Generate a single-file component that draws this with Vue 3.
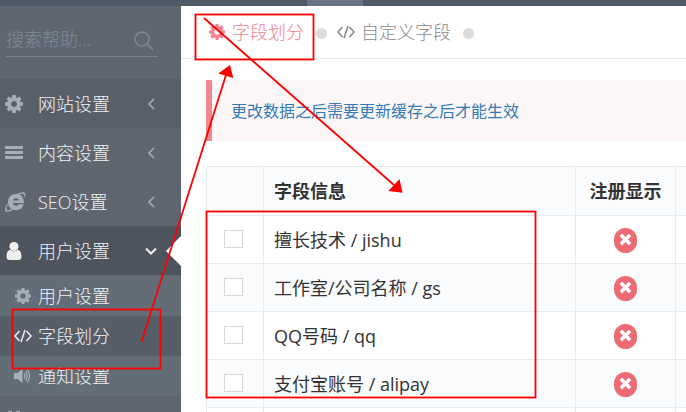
<script setup>
import { ref } from 'vue'

const cogPath = 'M1024 640q0 106 -75 181t-181 75t-181 -75t-75 -181t75 -181t181 -75t181 75t75 181zM1536 749v-222q0 -12 -8 -23t-20 -13l-185 -28q-19 -54 -39 -91q35 -50 107 -138q10 -12 10 -25t-9 -23q-27 -37 -99 -108t-94 -71q-12 0 -26 9l-138 108q-44 -23 -91 -38q-16 -136 -29 -186q-7 -28 -36 -28h-222q-14 0 -24.5 8.5t-11.5 21.5l-28 184q-49 16 -90 37l-141 -107q-10 -9 -25 -9q-14 0 -25 11q-126 114 -165 168q-7 10 -7 23q0 12 8 23q15 21 51 66.5t54 70.5q-27 50 -41 99l-183 27q-13 2 -21 12.5t-8 23.5v222q0 12 8 23t19 13l186 28q14 46 39 92q-40 57 -107 138q-10 12 -10 24q0 10 9 23q26 36 98.5 107.5t94.5 71.5q13 0 26 -10l138 -107q44 23 91 38q16 136 29 186q7 28 36 28h222q14 0 24.5 -8.5t11.5 -21.5l28 -184q49 -16 90 -37l142 107q9 9 24 9q13 0 25 -10q129 -119 165 -170q7 -8 7 -22q0 -12 -8 -23q-15 -21 -51 -66.5t-54 -70.5q26 -50 41 -98l183 -28q13 -2 21 -12.5t8 -23.5z'
const timesPath = 'M1298 214q0 -40 -28 -68l-136 -136q-28 -28 -68 -28t-68 28l-294 294l-294 -294q-28 -28 -68 -28t-68 28l-136 136q-28 28 -28 68t28 68l294 294l-294 294q-28 28 -28 68t28 68l136 136q28 28 68 28t68 -28l294 -294l294 294q28 28 68 28t68 -28l136 -136q28 -28 28 -68t-28 -68l-294 -294l294 -294q28 -28 28 -68z'

const query = ref('')
const rows = ref([
  { label: '擅长技术 / jishu', checked: false },
  { label: '工作室/公司名称 / gs', checked: false },
  { label: 'QQ号码 / qq', checked: false },
  { label: '支付宝账号 / alipay', checked: false },
  { label: '', checked: false }
])
</script>

<template>
  <div class="page">
    <header class="topbar"><span class="topbar-tab"></span></header>
    <div class="body">
      <aside class="sidebar">
        <form class="search" @submit.prevent>
          <input v-model="query" type="text" placeholder="搜索帮助..." aria-label="搜索帮助" />
          <button type="submit" aria-label="搜索">
            <svg width="20" height="20" viewBox="0 0 20 20" fill="none" stroke="currentColor" stroke-width="1.4">
              <circle cx="8" cy="8" r="7" />
              <path d="M13 13L19.3 19.3" />
            </svg>
          </button>
        </form>
        <nav class="menu">
          <a class="item shaded" href="#">
            <svg class="icon" viewBox="0 0 18 18"><svg x="0" y="0" width="18" height="18" viewBox="0 -1408 1536 1536"><path :d="cogPath" transform="scale(1,-1)" /></svg></svg>
            <span>网站设置</span>
            <svg class="chevron" viewBox="0 0 12 12"><path d="M9 1L4 6L9 11" /></svg>
          </a>
          <a class="item" href="#">
            <svg class="icon" viewBox="0 0 18 18"><path d="M0 2h18v3H0zM0 7h18v3H0zM0 12h18v3H0z" /></svg>
            <span>内容设置</span>
            <svg class="chevron" viewBox="0 0 12 12"><path d="M9 1L4 6L9 11" /></svg>
          </a>
          <a class="item" href="#">
            <svg class="icon ie" viewBox="0 0 22 20">
              <path fill-rule="evenodd" d="M12.2 2C17 2 20 5.300 20 11H8.800C9 12.800 10.200 13.800 12 13.800C13.500 13.800 14.500 13.300 15 12.300H19.700C18.600 16.200 15.900 18.200 12.200 18.200C7.300 18.200 4 14.900 4 10.200C4 5.500 7.300 2 12.200 2ZM8.900 8.500H15.100C14.900 7.100 13.900 6.200 12 6.200C10.200 6.200 9.200 7.100 8.900 8.500Z" />
              <path d="M3.800 9.500C7 5.600 10.800 2.700 15.500.8C18.200-.2 20.300 0 21 1.100C21.700 2.300 21.400 4.300 20.300 6.500C20.600 4.500 20.600 3 19.500 2.200C18 1.200 15.500 2 12.800 3.500C9.500 5.200 6.400 7.700 3.800 9.500Z" />
              <path d="M3.300 11.500C1.200 15.200.3 18 1.600 19.300C3.200 20.700 6.700 19.300 9.800 17.200L8.300 16.400C5.800 18 3.700 18.700 2.900 17.900C2 17 2.600 14.500 4.300 11.500Z" />
            </svg>
            <span>SEO设置</span>
            <svg class="chevron" viewBox="0 0 12 12"><path d="M9 1L4 6L9 11" /></svg>
          </a>
          <a class="item active" href="#">
            <svg class="icon" viewBox="0 0 18 18"><circle cx="9" cy="4.500" r="4.500" /><path d="M5.500 7.800C3 8 1.500 10.500 1.500 14.500C1.500 17 2.700 18 4.500 18H13.500C15.300 18 16.500 17 16.500 14.500C16.500 10.500 15 8 12.500 7.800C10.500 9.800 7.500 9.800 5.500 7.800Z" /></svg>
            <span>用户设置</span>
            <svg class="chevron" viewBox="0 0 12 12"><path d="M1 3.500L6 8.500L11 3.500" /></svg>
          </a>
          <div class="submenu">
            <a class="subitem" href="#">
              <svg class="subicon" viewBox="0 0 18 18"><svg x="1" y="1" width="16" height="16" viewBox="0 -1408 1536 1536"><path :d="cogPath" transform="scale(1,-1)" /></svg></svg>
              <span>用户设置</span>
            </a>
            <a class="subitem current" href="#">
              <svg class="subicon line" viewBox="0 0 18 18"><path d="M5.500 4L1 9L5.500 14M12.500 4L17 9L12.500 14M11 3L7 15" /></svg>
              <span>字段划分</span>
            </a>
            <a class="subitem" href="#">
              <svg class="subicon" viewBox="0 0 18 18">
                <path d="M0 6H3.500L8.500 2V16L3.500 12H0Z" />
                <path d="M10 6.500Q12 9 10 11.500M11.500 4.500Q15 9 11.500 13.500M13 2.500Q18.500 9 13 15.500" fill="none" stroke="currentColor" stroke-width="1.300" />
              </svg>
              <span>通知设置</span>
            </a>
          </div>
          <a class="item" href="#" aria-label="扩展">
            <svg class="icon plug" viewBox="0 0 18 20"><path d="M3 0H7V6H11V0H15V6H17V9C17 12 14 14 11 15V20H7V15C4 14 1 12 1 9V6H3Z" /></svg>
          </a>
        </nav>
      </aside>

      <main class="main">
        <nav class="tabs">
          <a class="tab selected" href="#">
            <svg class="subicon" viewBox="0 0 18 18"><svg x="1" y="1" width="16" height="16" viewBox="0 -1408 1536 1536"><path :d="cogPath" transform="scale(1,-1)" /></svg></svg>
            <span>字段划分</span>
          </a>
          <i class="dot"></i>
          <a class="tab" href="#">
            <svg class="subicon line" viewBox="0 0 18 18"><path d="M5.500 4L1 9L5.500 14M12.500 4L17 9L12.500 14M11 3L7 15" /></svg>
            <span>自定义字段</span>
          </a>
          <i class="dot"></i>
        </nav>
        <div class="content">
          <p class="note">更改数据之后需要更新缓存之后才能生效</p>
          <table class="grid">
            <colgroup><col class="c-check" /><col /><col class="c-flag" /><col class="c-rest" /></colgroup>
            <thead>
              <tr><th></th><th class="name">字段信息</th><th>注册显示</th><th></th></tr>
            </thead>
            <tbody>
              <tr v-for="(row, i) in rows" :key="i">
                <td class="pick"><input v-model="row.checked" type="checkbox" :aria-label="row.label" /></td>
                <td class="name">{{ row.label }}</td>
                <td class="state">
                  <button class="flag" type="button" aria-label="关闭">
                    <svg width="11" height="11" viewBox="110 -1170 1188 1188"><path :d="timesPath" transform="scale(1,-1)" fill="currentColor" /></svg>
                  </button>
                </td>
                <td></td>
              </tr>
            </tbody>
          </table>
        </div>
      </main>
    </div>

    <svg class="marks" width="686" height="412" viewBox="0 0 686 412" aria-hidden="true">
      <g fill="none" stroke="#fe0000" stroke-width="2">
        <rect x="195.500" y="14.500" width="118" height="45" stroke-width="1.800" />
        <rect x="12.500" y="309.500" width="148" height="59" stroke-width="1.800" />
        <rect x="206.500" y="211.500" width="329" height="186" stroke-width="1.800" />
        <path d="M141.500 342L226 75M204 18L394 185" stroke-width="1.800" />
      </g>
      <path d="M230 65L218.300 73.500L233.300 78ZM402.500 192.700L388.300 191L399.500 179Z" fill="#fe0000" />
    </svg>
  </div>
</template>

<style>
body {
  margin: 0;
  overflow: hidden;
}
</style>

<style scoped>
.page {
  position: relative;
  display: flex;
  flex-direction: column;
  height: 100vh;
  overflow: hidden;
  background: #fff;
  color: #333;
  font-family: "Open Sans", "Noto Sans CJK SC", sans-serif;
  font-size: 18px;
  line-height: 24px;
}
a {
  color: inherit;
  text-decoration: none;
}
svg {
  display: block;
  flex: none;
}
.topbar {
  flex: none;
  height: 6px;
  padding-left: 307px;
  background: #4e5a65;
}
.topbar-tab {
  display: block;
  width: 56px;
  height: 6px;
  background: #687385;
}
.body {
  display: flex;
  flex: 1;
  min-height: 0;
}
.sidebar {
  flex: none;
  width: 181px;
  overflow: hidden;
  background: #5f6670;
}
.search {
  display: flex;
  align-items: center;
  height: 34px;
  margin: 16px 23px 22px 6px;
  border-bottom: 1px solid #748592;
}
.search input {
  flex: 1;
  min-width: 0;
  padding: 0;
  border: 0;
  outline: 0;
  background: none;
  color: #7e8b99;
  font: inherit;
  font-weight: 300;
}
.search input::placeholder {
  color: #7e8b99;
  opacity: 1;
}
.search button {
  padding: 4px 4px 0 0;
  border: 0;
  background: none;
  color: #7e8b99;
}
.item {
  position: relative;
  display: flex;
  align-items: center;
  box-sizing: border-box;
  height: 49px;
  padding: 0 24px 0 5px;
  color: #f0f2f4;
  font-weight: 300;
}
.item span,
.subitem span {
  flex: 1;
}
.shaded {
  background: #595f69;
}
.active {
  background: #4d545d;
}
.active::after {
  content: "";
  position: absolute;
  top: 10px;
  right: 0;
  border: 15px solid transparent;
  border-left: 0;
  border-right-color: #fff;
}
.icon {
  width: 18px;
  height: 18px;
  margin-right: 15px;
  fill: #a5adb7;
}
.ie {
  width: 22px;
  height: 20px;
  margin-left: -1px;
  margin-right: 12px;
}
.plug {
  height: 20px;
}
.active .icon {
  fill: #f0f0f0;
}
.chevron {
  width: 12px;
  height: 12px;
  fill: none;
  stroke: #a5adb7;
  stroke-width: 1.6;
}
.active .chevron {
  stroke: #f0f0f0;
  stroke-width: 2;
}
.submenu {
  padding-top: 1px;
  background: #636d78;
}
.subitem {
  display: flex;
  align-items: center;
  gap: 6px;
  height: 40px;
  padding-left: 14px;
  color: #f0f2f4;
  font-weight: 300;
}
.subicon {
  width: 18px;
  height: 18px;
  color: #a5adb7;
  fill: currentColor;
}
.line {
  fill: none;
  stroke: currentColor;
  stroke-width: 1.5;
}
.current {
  background: #585e69;
}
.current .subicon {
  color: #f0f0f0;
}
.main {
  flex: 1;
  min-width: 0;
  overflow: hidden;
}
.tabs {
  display: flex;
  align-items: center;
  height: 52px;
  padding-left: 27px;
  border-bottom: 1px solid #e8e8e8;
}
.tab {
  display: flex;
  align-items: center;
  gap: 6px;
  color: #888;
  font-weight: 300;
}
.tab .subicon {
  color: inherit;
}
.selected {
  color: #f2838f;
}
.dot {
  width: 11px;
  height: 11px;
  margin: 3px 10px 0 12px;
  border-radius: 50%;
  background: #dcdcdc;
}
.content {
  padding: 21px 0 0 25px;
}
.note {
  margin: 0 0 25px;
  padding: 19px 19px 18px;
  border-left: 6px solid #f0868e;
  background: #fdf6f6;
  color: #337ab7;
  font-size: 16px;
}
.grid {
  width: calc(100% + 61px);
  border-collapse: collapse;
  table-layout: fixed;
}
.c-check {
  width: 57px;
}
.c-flag {
  width: 100px;
}
.c-rest {
  width: 71px;
}
th,
td {
  box-sizing: border-box;
  height: 48px;
  padding: 0;
  border: 1px solid #e7ebef;
  text-align: center;
}
th {
  height: 49px;
  font-weight: 700;
}
.name {
  padding-left: 10px;
  text-align: left;
}
.pick {
  padding: 0 4px 2px 0;
}
.state {
  padding-top: 2px;
}
thead tr,
tbody tr:nth-child(even) {
  background: #fafbfd;
}
td input {
  display: block;
  appearance: none;
  width: 19px;
  height: 18px;
  margin: 0 auto;
  border: 1px solid #d6d8da;
  background: #fff;
}
.flag {
  display: block;
  width: 23px;
  height: 25px;
  margin: 0 auto;
  padding: 0 6px 2px;
  border: 0;
  border-radius: 12px;
  background: #ed6b75;
  color: #fff;
}
.marks {
  position: absolute;
  top: 0;
  left: 0;
  pointer-events: none;
}
</style>
